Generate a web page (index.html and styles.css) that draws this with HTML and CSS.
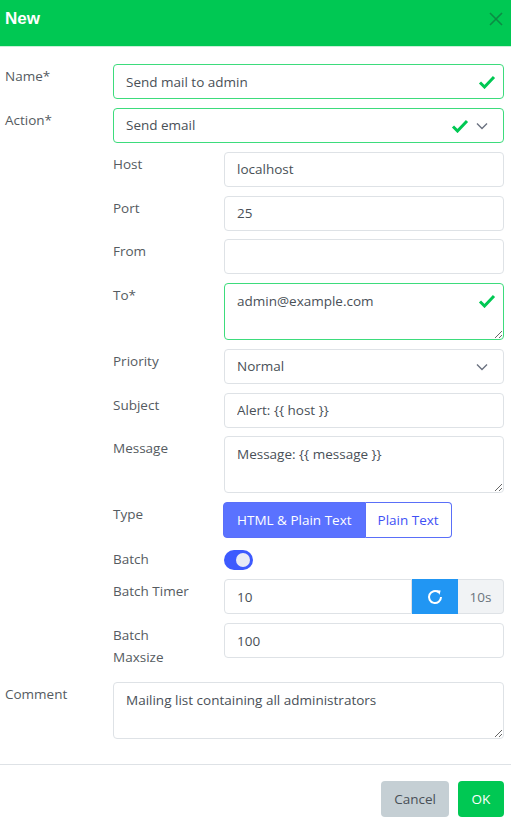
FILE: index.html
```html
<!DOCTYPE html>
<html>
<head>
<meta charset="utf-8">
<link rel="stylesheet" href="styles.css">
</head>
<body>
<div class="header">
  <div class="title">New</div>
  <svg class="close" width="14" height="14" viewBox="0 0 14 14"><path d="M1 1L13 13M13 1L1 13" stroke="#0b8c44" stroke-width="1.6" fill="none"/></svg>
</div>
<div class="form">
  <div class="row">
    <label class="lbl">Name*</label>
    <div class="field valid">
      <input class="ctl ok" value="Send mail to admin">
      <svg class="check" width="18" height="14" viewBox="0 0 18 14"><path d="M2 7.5L6.5 12L16 2" stroke="#00c853" stroke-width="3" fill="none"/></svg>
    </div>
  </div>
  <div class="row">
    <label class="lbl">Action*</label>
    <div class="field">
      <div class="ctl ok select">Send email</div>
      <svg class="check check2" width="18" height="14" viewBox="0 0 18 14"><path d="M2 7.5L6.5 12L16 2" stroke="#00c853" stroke-width="3" fill="none"/></svg>
      <svg class="chev" width="12" height="8" viewBox="0 0 12 8"><path d="M1 1.5L6 6.5L11 1.5" stroke="#6b7280" stroke-width="1.4" fill="none"/></svg>
    </div>
  </div>
  <div class="sub">
    <div class="row srow">
      <label class="lbl">Host</label>
      <input class="ctl" value="localhost">
    </div>
    <div class="row srow">
      <label class="lbl">Port</label>
      <input class="ctl" value="25">
    </div>
    <div class="row srow">
      <label class="lbl">From</label>
      <input class="ctl" value="">
    </div>
    <div class="row srow">
      <label class="lbl">To*</label>
      <div class="field">
        <textarea class="ctl area ok">admin@example.com</textarea>
        <svg class="check check3" width="18" height="14" viewBox="0 0 18 14"><path d="M2 7.5L6.5 12L16 2" stroke="#00c853" stroke-width="3" fill="none"/></svg>
      </div>
    </div>
    <div class="row srow">
      <label class="lbl">Priority</label>
      <div class="field">
        <div class="ctl select">Normal</div>
        <svg class="chev" width="12" height="8" viewBox="0 0 12 8"><path d="M1 1.5L6 6.5L11 1.5" stroke="#6b7280" stroke-width="1.4" fill="none"/></svg>
      </div>
    </div>
    <div class="row srow">
      <label class="lbl">Subject</label>
      <input class="ctl" value="Alert: {{ host }}">
    </div>
    <div class="row srow">
      <label class="lbl">Message</label>
      <textarea class="ctl area">Message: {{ message }}</textarea>
    </div>
    <div class="row srow">
      <label class="lbl">Type</label>
      <div class="seg">
        <span class="segbtn active">HTML &amp; Plain Text</span><span class="segbtn">Plain Text</span>
      </div>
    </div>
    <div class="row srow batchrow">
      <label class="lbl">Batch</label>
      <div class="tgwrap"><span class="toggle"><span class="knob"></span></span></div>
    </div>
    <div class="row srow">
      <label class="lbl">Batch Timer</label>
      <div class="group">
        <input class="ctl gin" value="10">
        <span class="reload"><svg width="18" height="18" viewBox="0 0 18 18"><path d="M15 9A6 6 0 1 1 12.6 4.2" stroke="#fff" stroke-width="2" fill="none"/><path d="M10.2 2.2L14.6 2.6L13.6 6.8Z" fill="#fff"/></svg></span>
        <span class="addon">10s</span>
      </div>
    </div>
    <div class="row srow last">
      <label class="lbl">Batch<br>Maxsize</label>
      <input class="ctl" value="100">
    </div>
  </div>
  <div class="row">
    <label class="lbl">Comment</label>
    <textarea class="ctl area">Mailing list containing all administrators</textarea>
  </div>
</div>
<div class="footer">
  <button class="btn cancel">Cancel</button>
  <button class="btn okbtn">OK</button>
</div>
</body>
</html>
```
FILE: styles.css
```css
* { box-sizing: border-box; }
body {
  margin: 0;
  font-family: "Open Sans", "Noto Sans", sans-serif;
  font-size: 13.5px;
  color: #495057;
  background: #fff;
}
.header {
  height: 47px;
  background: #00c853;
  border-bottom: 1px solid #c8f1d8;
  display: flex;
  align-items: center;
  justify-content: space-between;
  padding: 0 8px 9px 5px;
}
.title {
  font-family: "Liberation Sans", Arial, sans-serif;
  font-weight: bold;
  font-size: 17px;
  color: #fff;
}
.form {
  padding: 17px 7px 0 5px;
}
.row {
  display: grid;
  grid-template-columns: 108px 1fr;
  margin-bottom: 8.85px;
}
.sub { padding-left: 108px; margin-bottom: 0; }
.srow { grid-template-columns: 111px 1fr; }
.row.last { margin-bottom: 0; height: 59px; }
.lbl {
  line-height: 22px;
  padding-top: 1px;
  color: #555b61;
}
.field { position: relative; }
.ctl {
  display: block;
  width: 100%;
  height: 35px;
  border: 1px solid #dee2e6;
  border-radius: 4px;
  padding: 0 12px;
  font-family: inherit;
  font-size: 13.5px;
  color: #495057;
  background: #fff;
  outline: none;
  margin: 0;
}
.ctl.ok { border-color: #3ddc7c; }
.select { line-height: 33px; }
.area {
  height: 56.6px;
  padding: 7px 12px;
  line-height: 21px;
  resize: vertical;
}
.check { position: absolute; right: 8px; top: 11px; }
.check2 { right: 35px; }
.check3 { top: 11px; }
.chev { position: absolute; right: 16px; top: 14px; }
.seg {
  display: flex;
  margin-left: -1px;
}
.segbtn {
  height: 36px;
  line-height: 34px;
  padding: 0 12px;
  border: 1px solid #5a6ff8;
  color: #3f51f5;
  background: #fff;
}
.segbtn.active {
  padding: 0 13px;
  background: #5a72ff;
  color: #fff;
  border-radius: 4px 0 0 4px;
}
.segbtn:last-child { border-radius: 0 4px 4px 0; border-left: none; }
.batchrow { height: 24px; }
.tgwrap { display: flex; height: 24px; align-items: flex-start; }
.toggle {
  display: flex;
  align-items: center;
  justify-content: flex-end;
  width: 29px;
  height: 20px;
  margin-top: 3px;
  border-radius: 10px;
  background: #3d5afe;
  padding: 3px;
}
.knob {
  width: 14px;
  height: 14px;
  border-radius: 50%;
  background: #e8eaf6;
}
.group { display: flex; }
.gin { flex: 1; border-radius: 4px 0 0 4px; }
.reload {
  width: 46px;
  height: 35px;
  background: #2196f3;
  display: flex;
  align-items: center;
  justify-content: center;
}
.addon {
  width: 46px;
  height: 35px;
  background: #f1f3f5;
  border: 1px solid #dee2e6;
  border-left: none;
  border-radius: 0 4px 4px 0;
  color: #6c757d;
  display: flex;
  align-items: center;
  justify-content: center;
}
.footer {
  margin-top: 25px;
  border-top: 1px solid #dee2e6;
  padding: 16px 7px 0 0;
  display: flex;
  justify-content: flex-end;
  gap: 9px;
}
.btn {
  height: 36px;
  border: none;
  border-radius: 4px;
  font-family: inherit;
  font-size: 13.5px;
  padding: 0 8px;
}
.cancel { background: #c5cfd4; color: #495057; width: 68px; }
.okbtn { background: #00c853; color: #fff; width: 46px; }
```
